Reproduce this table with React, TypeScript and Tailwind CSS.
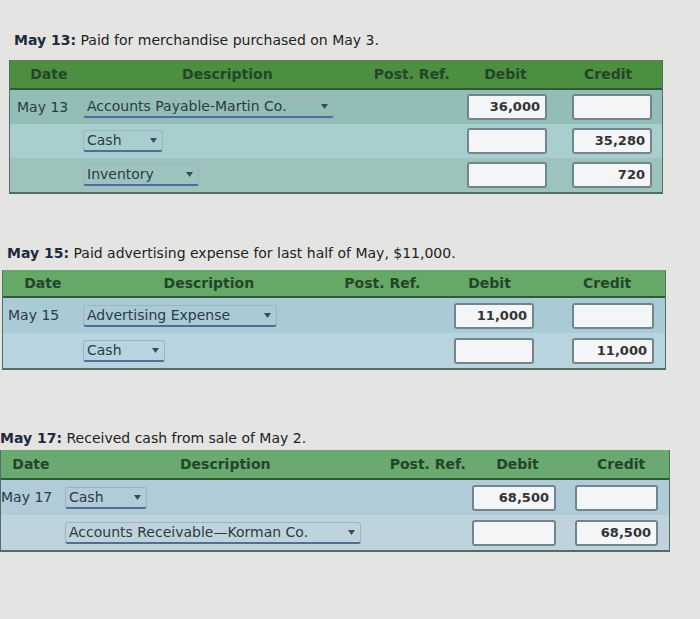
import React from "react";

type Line = {
  date?: string;
  account: string;
  selectW: string;
  debit?: string;
  credit?: string;
  bg: string;
};

type Head = { label: string; w: string };

type Entry = {
  day: string;
  text: string;
  titleCls: string;
  tableCls: string;
  headerCls: string;
  heads: Head[];
  rowCls: string;
  dateCls: string;
  debitW: string;
  creditW: string;
  gapW: string;
  lines: Line[];
};

const entries: Entry[] = [
  {
    day: "May 13:",
    text: "Paid for merchandise purchased on May 3.",
    titleCls: "mt-[31px] pl-[14px]",
    tableCls: "mt-[11px] ml-[9px] w-[654px]",
    headerCls: "h-[30px] bg-[#4d8f40]",
    heads: [
      { label: "Date", w: "w-[78px]" },
      { label: "Description", w: "w-[280px]" },
      { label: "Post. Ref.", w: "w-[90px]" },
      { label: "Debit", w: "w-[98px]" },
      { label: "Credit", w: "w-[108px]" },
    ],
    rowCls: "h-[34px] pr-[10px]",
    dateCls: "w-[73px] pl-[7px]",
    debitW: "w-[80px]",
    creditW: "w-[80px]",
    gapW: "w-[25px]",
    lines: [
      { date: "May 13", account: "Accounts Payable-Martin Co.", selectW: "w-[251px]", debit: "36,000", bg: "bg-[#93bdb7]" },
      { account: "Cash", selectW: "w-[80px]", credit: "35,280", bg: "bg-[#a9ced0]" },
      { account: "Inventory", selectW: "w-[116px]", credit: "720", bg: "bg-[#9cc4bd]" },
    ],
  },
  {
    day: "May 15:",
    text: "Paid advertising expense for last half of May, $11,000.",
    titleCls: "mt-[50px] pl-[7px]",
    tableCls: "mt-[8px] ml-[2px] w-[664px]",
    headerCls: "h-[28px] bg-[#66a966]",
    heads: [
      { label: "Date", w: "w-[80px]" },
      { label: "Description", w: "w-[253px]" },
      { label: "Post. Ref.", w: "w-[95px]" },
      { label: "Debit", w: "w-[120px]" },
      { label: "Credit", w: "w-[116px]" },
    ],
    rowCls: "h-[35px] pr-[11px]",
    dateCls: "w-[80px] pl-[5px]",
    debitW: "w-[80px]",
    creditW: "w-[82px]",
    gapW: "w-[38px]",
    lines: [
      { date: "May 15", account: "Advertising Expense", selectW: "w-[194px]", debit: "11,000", bg: "bg-[#a8cbd6]" },
      { account: "Cash", selectW: "w-[82px]", credit: "11,000", bg: "bg-[#b8d4de]" },
    ],
  },
  {
    day: "May 17:",
    text: "Received cash from sale of May 2.",
    titleCls: "mt-[59px] pl-0",
    tableCls: "mt-[3px] ml-0 w-[670px]",
    headerCls: "h-[30px] bg-[#6aaa70]",
    heads: [
      { label: "Date", w: "w-[60px]" },
      { label: "Description", w: "w-[330px]" },
      { label: "Post. Ref.", w: "w-[72px]" },
      { label: "Debit", w: "w-[112px]" },
      { label: "Credit", w: "w-[96px]" },
    ],
    rowCls: "h-[35px] pr-[11px]",
    dateCls: "w-[64px] pl-0",
    debitW: "w-[84px]",
    creditW: "w-[83px]",
    gapW: "w-[19px]",
    lines: [
      { date: "May 17", account: "Cash", selectW: "w-[82px]", debit: "68,500", bg: "bg-[#b1cbd9]" },
      { account: "Accounts Receivable\u2014Korman Co.", selectW: "w-[296px]", credit: "68,500", bg: "bg-[#bfd3dc]" },
    ],
  },
];

function Select({ label, w }: { label: string; w: string }) {
  return (
    <div
      className={`flex h-[22px] items-center justify-between rounded-[3px] border border-[#9db4b8] border-b-2 border-b-[#4f6c9c] pl-[3px] pr-[5px] text-[14px] text-[#2c3a44] ${w}`}
    >
      <span className="whitespace-nowrap">{label}</span>
      <svg width="7" height="5" viewBox="0 0 7 5" className="shrink-0">
        <path d="M0 0h7L3.5 5z" fill="#3a4a5a" />
      </svg>
    </div>
  );
}

function Amount({ value, w }: { value?: string; w: string }) {
  return (
    <div
      className={`flex h-[26px] items-center justify-end rounded-[3px] border-2 border-[#73858c] bg-[#f3f5f6] pr-[5px] text-[13px] font-bold text-[#333] ${w}`}
    >
      {value}
    </div>
  );
}

function Journal({ e }: { e: Entry }) {
  return (
    <div>
      <div className={`text-[14px] leading-[18px] text-[#222] ${e.titleCls}`}>
        <span className="font-bold text-[#1e2a3a]">{e.day}</span> {e.text}
      </div>
      <div className={`border-x border-b-2 border-[#4f6f66] ${e.tableCls}`}>
        <div
          className={`flex items-center border-b-2 border-[#2f5a36] text-[14px] font-bold text-[#24452a] ${e.headerCls}`}
        >
          {e.heads.map((h) => (
            <div key={h.label} className={`whitespace-nowrap text-center ${h.w}`}>
              {h.label}
            </div>
          ))}
        </div>
        {e.lines.map((l, i) => (
          <div key={i} className={`flex items-center ${e.rowCls} ${l.bg}`}>
            <div className={`text-[14px] text-[#2c3a44] ${e.dateCls}`}>{l.date}</div>
            <div className="flex-1">
              <Select label={l.account} w={l.selectW} />
            </div>
            <Amount value={l.debit} w={e.debitW} />
            <div className={e.gapW} />
            <Amount value={l.credit} w={e.creditW} />
          </div>
        ))}
      </div>
    </div>
  );
}

export default function App() {
  return (
    <div className="h-[619px] w-[700px] overflow-hidden bg-[#e4e4e2] font-['DejaVu_Sans',sans-serif]">
      {entries.map((e) => (
        <Journal key={e.day} e={e} />
      ))}
    </div>
  );
}
